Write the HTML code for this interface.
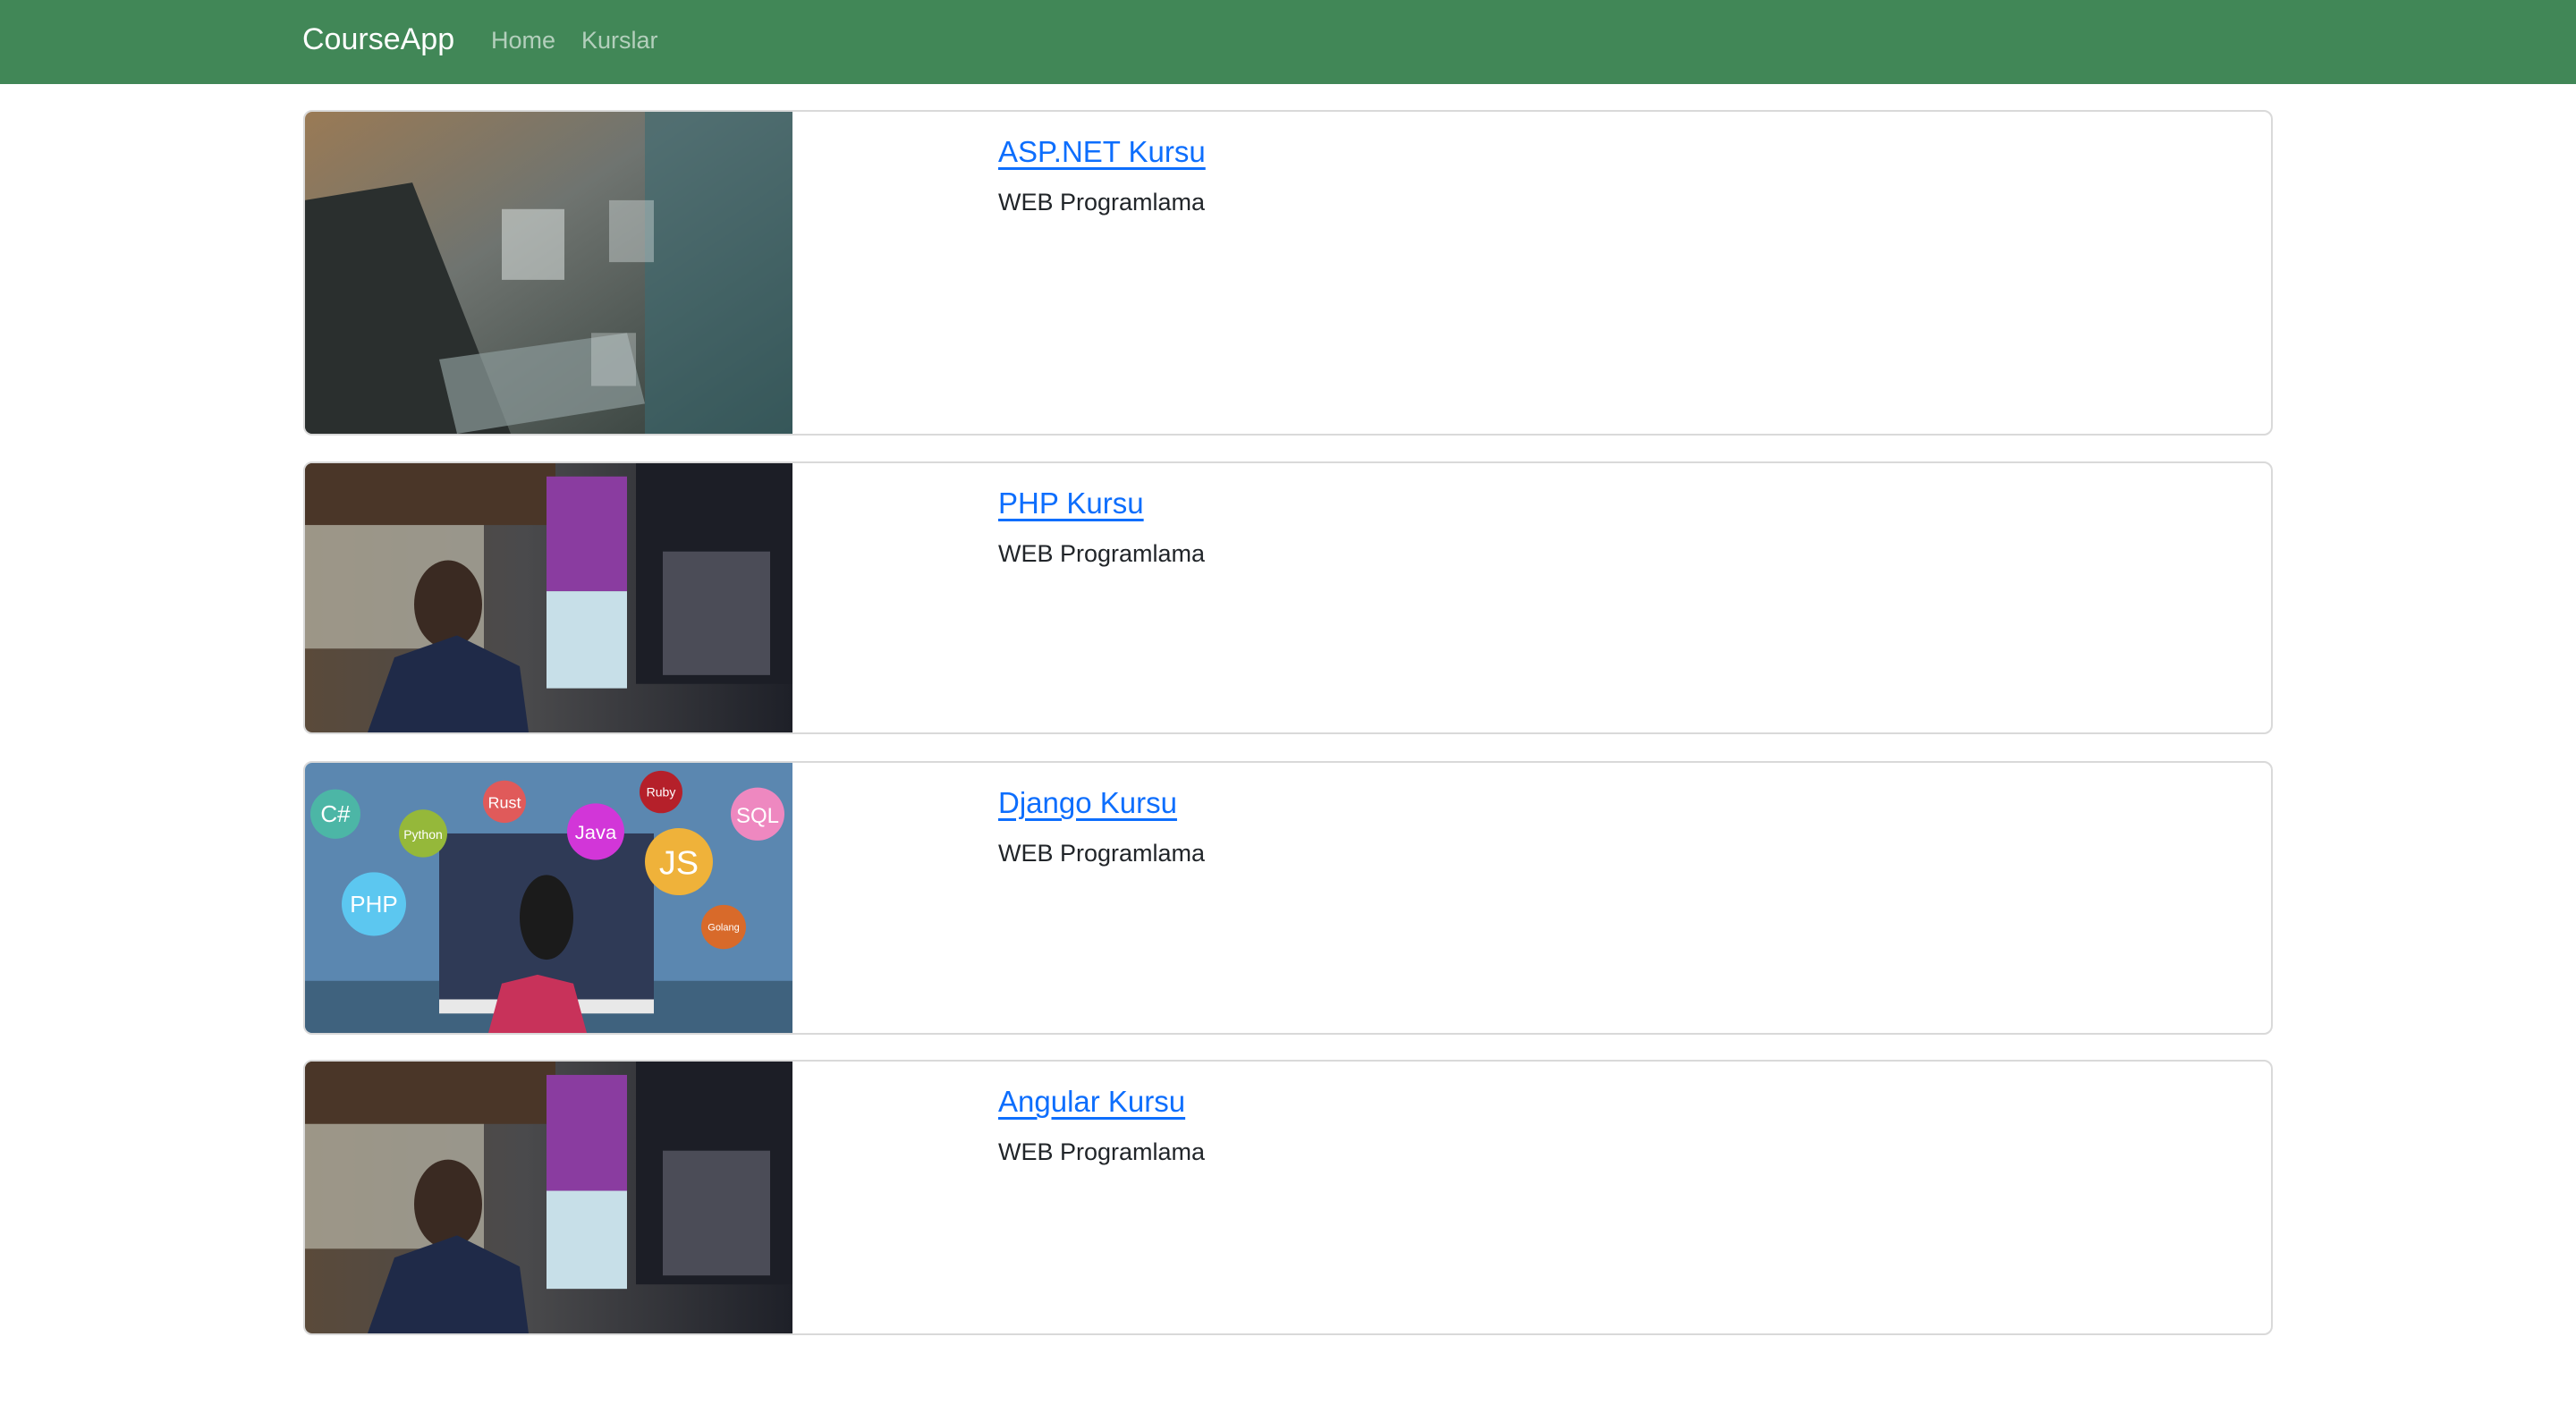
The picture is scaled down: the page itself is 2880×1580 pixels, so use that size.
<!DOCTYPE html>
<html><head><meta charset="utf-8"><style>
*{box-sizing:border-box;margin:0;padding:0}
body{width:2880px;height:1580px;background:#fff;font-family:"Liberation Sans",sans-serif;position:relative;overflow:hidden}
.nav{position:absolute;left:0;top:0;width:2880px;height:94px;background:#418757}
.brand{position:absolute;left:338px;top:25px;font-size:34px;color:#fff}
.nl{position:absolute;top:30px;font-size:27px;color:rgba(255,255,255,.6)}
.card{position:absolute;left:339px;width:2202px;border:2px solid #d9d9d9;border-radius:10px;overflow:hidden}
.img{position:absolute;left:0;top:0;bottom:0;width:545px}
.img svg{width:100%;height:100%;display:block}
.t{position:absolute;left:775px;top:26px;font-size:33px;color:#0d6efd;text-decoration:underline;text-decoration-thickness:3px;text-underline-offset:6px}
.s{position:absolute;left:775px;top:86px;font-size:27px;color:#212529}
</style></head><body>
<div class="nav"><div class="brand">CourseApp</div><div class="nl" style="left:549px">Home</div><div class="nl" style="left:650px">Kurslar</div></div>

<svg width="0" height="0" style="position:absolute"><defs>
<linearGradient id="g1" x1="0" y1="0" x2="1" y2="1"><stop offset="0" stop-color="#9a7a55"/><stop offset=".4" stop-color="#6f7470"/><stop offset="1" stop-color="#2e3a36"/></linearGradient>
<linearGradient id="g2" x1="0" y1="0" x2="1" y2="0"><stop offset="0" stop-color="#5a4a3a"/><stop offset=".45" stop-color="#4a4a4c"/><stop offset="1" stop-color="#1e2028"/></linearGradient>
</defs></svg>

<div class="card" style="top:123px;height:364px">
<div class="img"><svg viewBox="0 0 545 364" preserveAspectRatio="none"><rect width="545" height="364" fill="url(#g1)"/><rect x="380" y="0" width="165" height="364" fill="#3c6a72" opacity=".6"/><path d="M0 100 L120 80 L230 364 L0 364Z" fill="#2a2f2e"/><path d="M150 280 L360 250 L380 330 L170 364Z" fill="#8c9a9a" opacity=".7"/><rect x="220" y="110" width="70" height="80" fill="#e6ecea" opacity=".5"/><rect x="340" y="100" width="50" height="70" fill="#dfe5e5" opacity=".4"/><rect x="320" y="250" width="50" height="60" fill="#dfe5e5" opacity=".35"/></svg></div>
<div class="t">ASP.NET Kursu</div><div class="s">WEB Programlama</div></div>

<div class="card" style="top:516px;height:305px">
<div class="img"><svg viewBox="0 0 545 305" preserveAspectRatio="none"><rect width="545" height="305" fill="url(#g2)"/><rect x="0" y="0" width="280" height="70" fill="#4a3628"/><rect x="0" y="70" width="200" height="140" fill="#b9b6a8" opacity=".7"/><rect x="270" y="15" width="90" height="130" fill="#8a3ca0"/><rect x="270" y="145" width="90" height="110" fill="#c7dfe8"/><rect x="370" y="0" width="175" height="250" fill="#1c1e26"/><rect x="400" y="100" width="120" height="140" fill="#6a6a78" opacity=".6"/><ellipse cx="160" cy="160" rx="38" ry="50" fill="#3a2a22"/><path d="M70 305 L100 220 L170 195 L240 230 L250 305Z" fill="#1f2a48"/></svg></div>
<div class="t">PHP Kursu</div><div class="s">WEB Programlama</div></div>

<div class="card" style="top:851px;height:306px">
<div class="img"><svg viewBox="0 0 545 306" preserveAspectRatio="none"><rect width="545" height="306" fill="#5b87b0"/><rect y="247" width="545" height="59" fill="#3f627e"/><rect x="150" y="80" width="240" height="200" fill="#2f3a56"/><rect x="150" y="268" width="240" height="16" fill="#e8e8e8"/><path d="M205 306 L220 250 L260 240 L300 250 L315 306Z" fill="#c8325a"/><ellipse cx="270" cy="175" rx="30" ry="48" fill="#1b1b1b"/>
<circle cx="34" cy="58" r="28" fill="#4cb6a6"/><text x="34" y="67" font-size="26" fill="#fff" text-anchor="middle" font-family="Liberation Sans">C#</text>
<circle cx="132" cy="80" r="27" fill="#95b83a"/><text x="132" y="86" font-size="14" fill="#fff" text-anchor="middle" font-family="Liberation Sans">Python</text>
<circle cx="223" cy="44" r="24" fill="#e05a5a"/><text x="223" y="51" font-size="18" fill="#fff" text-anchor="middle" font-family="Liberation Sans">Rust</text>
<circle cx="398" cy="33" r="24" fill="#b5202a"/><text x="398" y="38" font-size="14" fill="#fff" text-anchor="middle" font-family="Liberation Sans">Ruby</text>
<circle cx="506" cy="58" r="30" fill="#ee88c0"/><text x="506" y="68" font-size="24" fill="#fff" text-anchor="middle" font-family="Liberation Sans">SQL</text>
<circle cx="325" cy="78" r="32" fill="#d236d8"/><text x="325" y="86" font-size="22" fill="#fff" text-anchor="middle" font-family="Liberation Sans">Java</text>
<circle cx="418" cy="112" r="38" fill="#efb23a"/><text x="418" y="126" font-size="38" fill="#fff" text-anchor="middle" font-family="Liberation Sans">JS</text>
<circle cx="77" cy="160" r="36" fill="#5cc7f0"/><text x="77" y="169" font-size="26" fill="#fff" text-anchor="middle" font-family="Liberation Sans">PHP</text>
<circle cx="468" cy="186" r="25" fill="#d86a2a"/><text x="468" y="190" font-size="11" fill="#fff" text-anchor="middle" font-family="Liberation Sans">Golang</text></svg></div>
<div class="t">Django Kursu</div><div class="s">WEB Programlama</div></div>

<div class="card" style="top:1185px;height:308px">
<div class="img"><svg viewBox="0 0 545 305" preserveAspectRatio="none"><rect width="545" height="305" fill="url(#g2)"/><rect x="0" y="0" width="280" height="70" fill="#4a3628"/><rect x="0" y="70" width="200" height="140" fill="#b9b6a8" opacity=".7"/><rect x="270" y="15" width="90" height="130" fill="#8a3ca0"/><rect x="270" y="145" width="90" height="110" fill="#c7dfe8"/><rect x="370" y="0" width="175" height="250" fill="#1c1e26"/><rect x="400" y="100" width="120" height="140" fill="#6a6a78" opacity=".6"/><ellipse cx="160" cy="160" rx="38" ry="50" fill="#3a2a22"/><path d="M70 305 L100 220 L170 195 L240 230 L250 305Z" fill="#1f2a48"/></svg></div>
<div class="t">Angular Kursu</div><div class="s">WEB Programlama</div></div>
</body></html>
